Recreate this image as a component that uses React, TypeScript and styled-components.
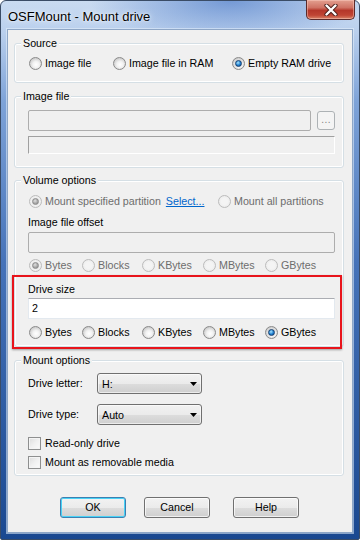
import React from 'react';
import styled, { createGlobalStyle, css } from 'styled-components';

const GlobalStyle = createGlobalStyle`
  html, body { margin: 0; padding: 0; background: #ffffff; }
  body {
    font-family: "Liberation Sans", Arial, sans-serif;
    font-size: 10.7px;
    color: #000;
  }
`;

const Frame = styled.div`
  box-sizing: border-box;
  width: 360px;
  height: 540px;
  border: 1px solid #3a4c66;
  border-radius: 6px 6px 2px 2px;
  padding: 0 6px 6px 6px;
  display: flex;
  flex-direction: column;
  background:
    radial-gradient(ellipse 140px 40px at 64% 0%, rgba(60, 110, 195, 0.6), rgba(60, 110, 195, 0) 100%),
    linear-gradient(180deg, #c9dbf1 0px, #b9cfed 32px, #7ea3d8 100px, #4673b9 260px, #1a4890 540px);
`;

const TitleBar = styled.div`
  height: 28px;
  display: flex;
  align-items: flex-start;
  justify-content: space-between;
`;

const TitleText = styled.div`
  font-size: 13px;
  line-height: 13px;
  margin-top: 9px;
  margin-left: 1px;
  color: #000;
  text-shadow: 0 0 6px rgba(255, 255, 255, 0.9), 0 0 2px rgba(255, 255, 255, 0.9);
`;

const CloseButton = styled.div`
  box-sizing: border-box;
  width: 49px;
  height: 20px;
  margin-top: -1px;
  margin-right: -2px;
  border: 1px solid #5a2a2a;
  border-top: none;
  border-radius: 0 0 5px 5px;
  display: flex;
  align-items: center;
  justify-content: center;
  background: linear-gradient(180deg, #e3a090 0%, #cf7264 40%, #b5372a 55%, #c04534 80%, #d98468 100%);
  box-shadow: inset 0 0 0 1px rgba(255, 210, 200, 0.45);
`;

const Client = styled.div`
  flex: 1;
  box-sizing: border-box;
  border: 1px solid #8ea6c6;
  box-shadow: 0 0 0 1px rgba(230, 240, 252, 0.55);
  background: #f0f0f0;
  display: flex;
  flex-direction: column;
  padding: 0 0 0 6px;
`;

const Group = styled.div<{ $top: number; $height: number }>`
  position: relative;
  box-sizing: border-box;
  width: 330px;
  height: ${(p) => p.$height}px;
  margin-top: ${(p) => p.$top}px;
  border: 1px solid #d5dfe5;
  border-radius: 3px;
  box-shadow: inset 0 0 0 1px #ffffff;
  padding: 0 8px 0 13px;
  display: flex;
  flex-direction: column;
`;

const Legend = styled.div`
  position: absolute;
  top: -7px;
  left: 6px;
  padding: 0 2px;
  background: #f0f0f0;
  line-height: 13px;
`;

const RadioGrid = styled.div<{ $cols: string; $top: number }>`
  display: grid;
  grid-template-columns: ${(p) => p.$cols};
  align-items: center;
  margin-top: ${(p) => p.$top}px;
  height: 13px;
`;

const Item = styled.div`
  display: flex;
  align-items: center;
  white-space: nowrap;
  line-height: 13px;
`;

const RadioDot = styled.span<{ $checked?: boolean; $disabled?: boolean }>`
  box-sizing: border-box;
  width: 13px;
  height: 13px;
  margin-left: 1px;
  margin-right: 3px;
  border-radius: 50%;
  border: 1px solid ${(p) => (p.$disabled ? '#bcbcbc' : '#8a8a8a')};
  background: ${(p) =>
    p.$disabled
      ? 'radial-gradient(circle at 50% 50%, #f4f4f4 0%, #f4f4f4 40%, #e6e6e6 100%)'
      : 'radial-gradient(circle at 55% 60%, #ffffff 0%, #f2f2f2 35%, #c6c6c6 80%, #dcdcdc 100%)'};
  display: flex;
  align-items: center;
  justify-content: center;
  flex-shrink: 0;

  &::after {
    content: '';
    display: ${(p) => (p.$checked ? 'block' : 'none')};
    width: 5px;
    height: 5px;
    border-radius: 50%;
    ${(p) =>
      p.$disabled
        ? css`
            background: radial-gradient(circle at 40% 35%, #e0e0e0, #9a9a9a 70%);
            border: 1px solid #8c8c8c;
          `
        : css`
            background: radial-gradient(circle at 40% 35%, #a7e4ff, #1e7fcf 55%, #0b3f85 100%);
            border: 1px solid #163f6f;
          `}
  }
`;

const Text = styled.span<{ $disabled?: boolean }>`
  color: ${(p) => (p.$disabled ? '#6d6d6d' : '#000')};
  line-height: 13px;
`;

const LinkText = styled.span`
  color: #0066cc;
  text-decoration: underline;
  margin-left: 5px;
`;

const FieldLabel = styled.div<{ $top: number }>`
  line-height: 13px;
  margin-top: ${(p) => p.$top}px;
`;

const Field = styled.div<{ $variant: 'disabled' | 'sunken' | 'white'; $top: number; $width: number }>`
  box-sizing: border-box;
  width: ${(p) => p.$width}px;
  height: ${(p) => (p.$variant === 'sunken' ? 18 : 21)}px;
  margin-top: ${(p) => p.$top}px;
  display: flex;
  align-items: center;
  padding-left: 3px;
  line-height: 13px;
  ${(p) =>
    p.$variant === 'disabled'
      ? css`
          background: #f0f0f0;
          border: 1px solid #adadad;
          border-radius: 2px;
        `
      : p.$variant === 'sunken'
      ? css`
          background: #f0f0f0;
          border-top: 1px solid #a0a0a0;
          border-left: 1px solid #a0a0a0;
          border-right: 1px solid #ffffff;
          border-bottom: 1px solid #ffffff;
        `
      : css`
          background: #ffffff;
          border: 1px solid #e3e9ef;
          border-top-color: #abadb3;
        `}
`;

const PathRow = styled.div`
  display: flex;
  align-items: center;
  margin-top: 13px;
`;

const BrowseButton = styled.div`
  box-sizing: border-box;
  width: 18px;
  height: 19px;
  margin-left: 6px;
  border: 1px solid #adb2b5;
  border-radius: 3px;
  background: #f4f4f4;
  color: #838383;
  font-size: 10px;
  display: flex;
  align-items: flex-end;
  justify-content: center;
  padding-bottom: 4px;
  letter-spacing: 0.5px;
`;

const RedFrame = styled.div`
  position: relative;
  z-index: 1;
  box-sizing: border-box;
  width: 330px;
  height: 75px;
  margin: 3px 0 -3px -16px;
  border: 2px solid #e8141b;
  box-shadow: 0 1px 2px rgba(0, 0, 0, 0.35);
  padding: 0 7px 0 14px;
  display: flex;
  flex-direction: column;
`;

const FormRow = styled.div<{ $top: number }>`
  display: flex;
  align-items: center;
  margin-top: ${(p) => p.$top}px;
`;

const RowLabel = styled.span`
  width: 69px;
  line-height: 13px;
`;

const Combo = styled.div`
  box-sizing: border-box;
  width: 105px;
  height: 21px;
  border: 1px solid #707070;
  border-radius: 3px;
  background: linear-gradient(180deg, #f2f2f2 0%, #ebebeb 50%, #dddddd 51%, #cfcfcf 100%);
  box-shadow: inset 0 0 0 1px rgba(255, 255, 255, 0.6);
  display: flex;
  align-items: center;
  justify-content: space-between;
  padding: 0 4px 0 4px;
`;

const CheckItem = styled.div<{ $top: number }>`
  display: flex;
  align-items: center;
  margin-top: ${(p) => p.$top}px;
  line-height: 13px;
`;

const CheckBox = styled.span`
  box-sizing: border-box;
  width: 13px;
  height: 13px;
  margin-right: 4px;
  border: 1px solid #8e8f8f;
  background: linear-gradient(135deg, #dcdcdc 0%, #f0f0f0 50%, #fbfbfb 100%);
  box-shadow: inset 0 0 0 1px #f4f4f4;
`;

const ButtonRow = styled.div`
  display: flex;
  margin-top: 21px;
  padding-left: 46px;
`;

const PushButton = styled.div<{ $primary?: boolean; $gap: number }>`
  box-sizing: border-box;
  width: 66px;
  height: 21px;
  margin-left: ${(p) => p.$gap}px;
  border: 1px solid ${(p) => (p.$primary ? '#3c7fb1' : '#707070')};
  border-radius: 3px;
  background: linear-gradient(180deg, #f2f2f2 0%, #ebebeb 50%, #dddddd 51%, #cfcfcf 100%);
  box-shadow: inset 0 0 0 1px ${(p) => (p.$primary ? '#48d2f6' : 'rgba(255,255,255,0.7)')};
  display: flex;
  align-items: center;
  justify-content: center;
  line-height: 13px;
`;

const Radio: React.FC<{ label: string; checked?: boolean; disabled?: boolean; children?: React.ReactNode }> = ({
  label,
  checked,
  disabled,
  children,
}) => (
  <Item>
    <RadioDot $checked={checked} $disabled={disabled} />
    <Text $disabled={disabled}>{label}</Text>
    {children}
  </Item>
);

const Arrow = () => (
  <svg width="7" height="4" viewBox="0 0 7 4">
    <polygon points="0,0 7,0 3.5,4" fill="#000" />
  </svg>
);

const CloseGlyph = () => (
  <svg width="14" height="12" viewBox="0 0 14 12">
    <path d="M2.5 1.5 L11.5 10.5 M11.5 1.5 L2.5 10.5" stroke="#4a1f1a" strokeWidth="4.2" strokeLinecap="round" />
    <path d="M2.5 1.5 L11.5 10.5 M11.5 1.5 L2.5 10.5" stroke="#ffffff" strokeWidth="2.4" strokeLinecap="round" />
  </svg>
);

const units = ['Bytes', 'Blocks', 'KBytes', 'MBytes', 'GBytes'];
const unitCols = '53px 60px 61px 62px auto';

export default function App() {
  return (
    <>
      <GlobalStyle />
      <Frame>
        <TitleBar>
          <TitleText>OSFMount - Mount drive</TitleText>
          <CloseButton>
            <CloseGlyph />
          </CloseButton>
        </TitleBar>
        <Client>
          <Group $top={13} $height={40}>
            <Legend>Source</Legend>
            <RadioGrid $cols="84px 119px auto" $top={13}>
              <Radio label="Image file" />
              <Radio label="Image file in RAM" />
              <Radio label="Empty RAM drive" checked />
            </RadioGrid>
          </Group>

          <Group $top={13} $height={72}>
            <Legend>Image file</Legend>
            <PathRow>
              <Field $variant="disabled" $top={0} $width={285} />
              <BrowseButton>...</BrowseButton>
            </PathRow>
            <Field $variant="sunken" $top={5} $width={307} />
          </Group>

          <Group $top={12} $height={167}>
            <Legend>Volume options</Legend>
            <RadioGrid $cols="189px auto" $top={14}>
              <Radio label="Mount specified partition" checked disabled>
                <LinkText>Select...</LinkText>
              </Radio>
              <Radio label="Mount all partitions" disabled />
            </RadioGrid>
            <FieldLabel $top={8}>Image file offset</FieldLabel>
            <Field $variant="disabled" $top={3} $width={307} />
            <RadioGrid $cols={unitCols} $top={6}>
              {units.map((u, i) => (
                <Radio key={u} label={u} checked={i === 0} disabled />
              ))}
            </RadioGrid>
            <RedFrame>
              <FieldLabel $top={6}>Drive size</FieldLabel>
              <Field $variant="white" $top={2} $width={307}>
                2
              </Field>
              <RadioGrid $cols={unitCols} $top={7}>
                {units.map((u, i) => (
                  <Radio key={u} label={u} checked={i === 4} />
                ))}
              </RadioGrid>
            </RedFrame>
          </Group>

          <Group $top={13} $height={116}>
            <Legend>Mount options</Legend>
            <FormRow $top={12}>
              <RowLabel>Drive letter:</RowLabel>
              <Combo>
                <span>H:</span>
                <Arrow />
              </Combo>
            </FormRow>
            <FormRow $top={10}>
              <RowLabel>Drive type:</RowLabel>
              <Combo>
                <span>Auto</span>
                <Arrow />
              </Combo>
            </FormRow>
            <CheckItem $top={12}>
              <CheckBox />
              <span>Read-only drive</span>
            </CheckItem>
            <CheckItem $top={6}>
              <CheckBox />
              <span>Mount as removable media</span>
            </CheckItem>
          </Group>

          <ButtonRow>
            <PushButton $primary $gap={0}>OK</PushButton>
            <PushButton $gap={18}>Cancel</PushButton>
            <PushButton $gap={23}>Help</PushButton>
          </ButtonRow>
        </Client>
      </Frame>
    </>
  );
}
